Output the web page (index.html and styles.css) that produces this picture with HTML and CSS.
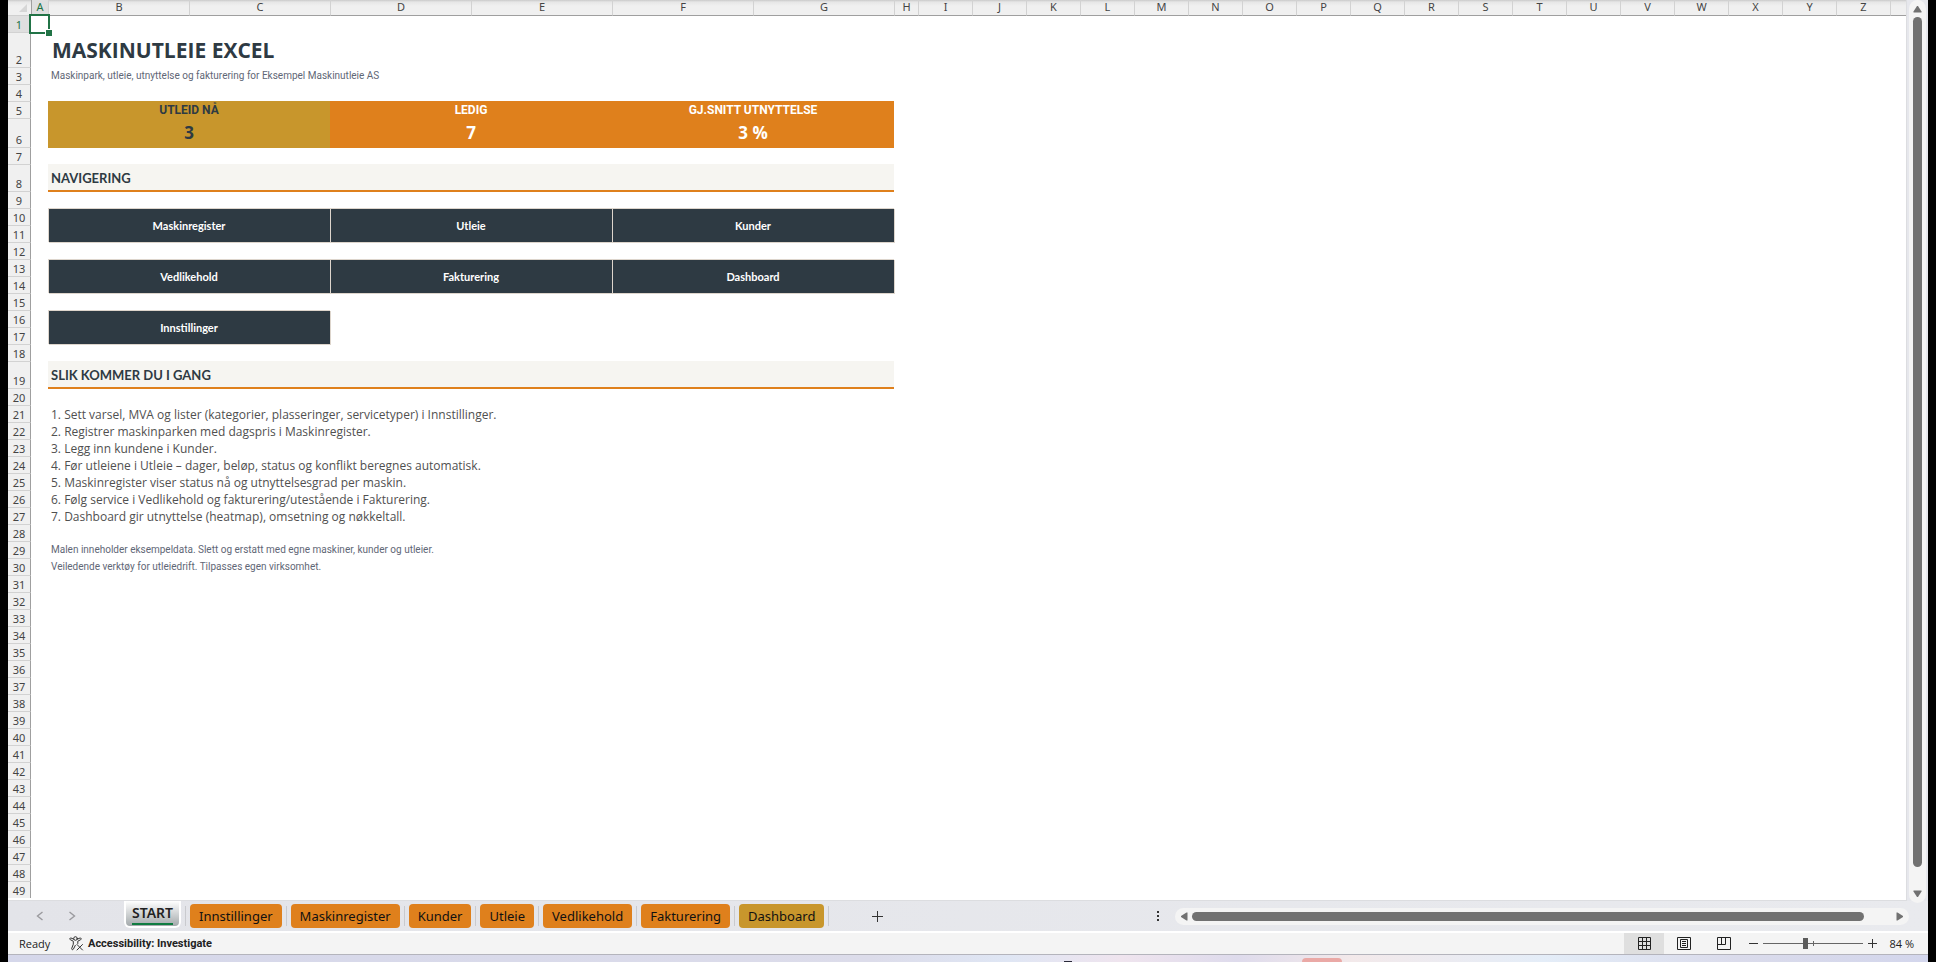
FILE: index.html
```
<!DOCTYPE html>
<html lang="nb">
<head>
<meta charset="utf-8">
<title>Maskinutleie Excel</title>
<link rel="stylesheet" href="styles.css">
</head>
<body>
<div class="window">
  <main class="workspace">
    <div class="sheet">
      <table class="grid">
        <colgroup>
          <col class="col-head"><col class="col-a"><col class="col-wide" span="6"><col class="col-h"><col class="col-std" span="18"><col>
        </colgroup>
        <thead>
          <tr>
            <th class="corner"><svg viewBox="0 0 8 8" width="8" height="8" aria-hidden="true"><path d="M8 0v8H0z" fill="#d6d6d6"/></svg></th>
            <th scope="col" class="selected">A</th><th scope="col">B</th><th scope="col">C</th><th scope="col">D</th><th scope="col">E</th><th scope="col">F</th><th scope="col">G</th><th scope="col">H</th><th scope="col">I</th><th scope="col">J</th><th scope="col">K</th><th scope="col">L</th><th scope="col">M</th><th scope="col">N</th><th scope="col">O</th><th scope="col">P</th><th scope="col">Q</th><th scope="col">R</th><th scope="col">S</th><th scope="col">T</th><th scope="col">U</th><th scope="col">V</th><th scope="col">W</th><th scope="col">X</th><th scope="col">Y</th><th scope="col">Z</th><th></th>
          </tr>
        </thead>
        <tbody>
          <tr class="row-first"><th scope="row" class="selected">1</th><td class="active-cell"><span class="cursor"></span></td><td colspan="26"></td></tr>
          <tr class="row-title"><th scope="row">2</th><td></td><td colspan="6" class="title">MASKINUTLEIE EXCEL</td><td colspan="20"></td></tr>
          <tr><th scope="row">3</th><td></td><td colspan="6" class="note">Maskinpark, utleie, utnyttelse og fakturering for Eksempel Maskinutleie AS</td><td colspan="20"></td></tr>
          <tr><th scope="row">4</th><td colspan="27"></td></tr>
          <tr><th scope="row">5</th><td></td><td colspan="2" class="kpi-label gold">UTLEID NÅ</td><td colspan="2" class="kpi-label orange">LEDIG</td><td colspan="2" class="kpi-label orange">GJ.SNITT UTNYTTELSE</td><td colspan="20"></td></tr>
          <tr class="row-kpi"><th scope="row">6</th><td></td><td colspan="2" class="kpi-value gold">3</td><td colspan="2" class="kpi-value orange">7</td><td colspan="2" class="kpi-value orange">3 %</td><td colspan="20"></td></tr>
          <tr><th scope="row">7</th><td colspan="27"></td></tr>
          <tr class="row-section"><th scope="row">8</th><td></td><td colspan="6" class="section">NAVIGERING</td><td colspan="20"></td></tr>
          <tr><th scope="row">9</th><td colspan="27"></td></tr>
          <tr><th scope="row">10</th><td></td><td colspan="2" rowspan="2"><a class="nav-link" href="#maskinregister">Maskinregister</a></td><td colspan="2" rowspan="2"><a class="nav-link" href="#utleie">Utleie</a></td><td colspan="2" rowspan="2"><a class="nav-link" href="#kunder">Kunder</a></td><td colspan="20"></td></tr>
          <tr><th scope="row">11</th><td></td><td colspan="20"></td></tr>
          <tr><th scope="row">12</th><td colspan="27"></td></tr>
          <tr><th scope="row">13</th><td></td><td colspan="2" rowspan="2"><a class="nav-link" href="#vedlikehold">Vedlikehold</a></td><td colspan="2" rowspan="2"><a class="nav-link" href="#fakturering">Fakturering</a></td><td colspan="2" rowspan="2"><a class="nav-link" href="#dashboard">Dashboard</a></td><td colspan="20"></td></tr>
          <tr><th scope="row">14</th><td></td><td colspan="20"></td></tr>
          <tr><th scope="row">15</th><td colspan="27"></td></tr>
          <tr><th scope="row">16</th><td></td><td colspan="2" rowspan="2"><a class="nav-link" href="#innstillinger">Innstillinger</a></td><td colspan="24"></td></tr>
          <tr><th scope="row">17</th><td></td><td colspan="24"></td></tr>
          <tr><th scope="row">18</th><td colspan="27"></td></tr>
          <tr class="row-section"><th scope="row">19</th><td></td><td colspan="6" class="section">SLIK KOMMER DU I GANG</td><td colspan="20"></td></tr>
          <tr><th scope="row">20</th><td colspan="27"></td></tr>
          <tr><th scope="row">21</th><td></td><td colspan="26" class="step">1. Sett varsel, MVA og lister (kategorier, plasseringer, servicetyper) i Innstillinger.</td></tr>
          <tr><th scope="row">22</th><td></td><td colspan="26" class="step">2. Registrer maskinparken med dagspris i Maskinregister.</td></tr>
          <tr><th scope="row">23</th><td></td><td colspan="26" class="step">3. Legg inn kundene i Kunder.</td></tr>
          <tr><th scope="row">24</th><td></td><td colspan="26" class="step">4. Før utleiene i Utleie – dager, beløp, status og konflikt beregnes automatisk.</td></tr>
          <tr><th scope="row">25</th><td></td><td colspan="26" class="step">5. Maskinregister viser status nå og utnyttelsesgrad per maskin.</td></tr>
          <tr><th scope="row">26</th><td></td><td colspan="26" class="step">6. Følg service i Vedlikehold og fakturering/utestående i Fakturering.</td></tr>
          <tr><th scope="row">27</th><td></td><td colspan="26" class="step">7. Dashboard gir utnyttelse (heatmap), omsetning og nøkkeltall.</td></tr>
          <tr><th scope="row">28</th><td colspan="27"></td></tr>
          <tr><th scope="row">29</th><td></td><td colspan="26" class="note">Malen inneholder eksempeldata. Slett og erstatt med egne maskiner, kunder og utleier.</td></tr>
          <tr><th scope="row">30</th><td></td><td colspan="26" class="note">Veiledende verktøy for utleiedrift. Tilpasses egen virksomhet.</td></tr>
          <tr><th scope="row">31</th><td colspan="27"></td></tr>
          <tr><th scope="row">32</th><td colspan="27"></td></tr>
          <tr><th scope="row">33</th><td colspan="27"></td></tr>
          <tr><th scope="row">34</th><td colspan="27"></td></tr>
          <tr><th scope="row">35</th><td colspan="27"></td></tr>
          <tr><th scope="row">36</th><td colspan="27"></td></tr>
          <tr><th scope="row">37</th><td colspan="27"></td></tr>
          <tr><th scope="row">38</th><td colspan="27"></td></tr>
          <tr><th scope="row">39</th><td colspan="27"></td></tr>
          <tr><th scope="row">40</th><td colspan="27"></td></tr>
          <tr><th scope="row">41</th><td colspan="27"></td></tr>
          <tr><th scope="row">42</th><td colspan="27"></td></tr>
          <tr><th scope="row">43</th><td colspan="27"></td></tr>
          <tr><th scope="row">44</th><td colspan="27"></td></tr>
          <tr><th scope="row">45</th><td colspan="27"></td></tr>
          <tr><th scope="row">46</th><td colspan="27"></td></tr>
          <tr><th scope="row">47</th><td colspan="27"></td></tr>
          <tr><th scope="row">48</th><td colspan="27"></td></tr>
          <tr><th scope="row">49</th><td colspan="27"></td></tr>
        </tbody>
      </table>
    </div>
    <div class="vscroll">
      <button class="scroll-btn" aria-label="Scroll up"><svg viewBox="0 0 9 8" width="9" height="8"><path d="M4 1h1l3.5 5.500v1h-8v-1z" fill="#717171"/></svg></button>
      <div class="vthumb"></div>
      <button class="scroll-btn" aria-label="Scroll down"><svg viewBox="0 0 9 8" width="9" height="8"><path d="M4 7h1l3.500-5.500v-1h-8v1z" fill="#717171"/></svg></button>
    </div>
  </main>

  <div class="tabstrip">
    <div class="tab-arrows">
      <button class="arrow" aria-label="Previous sheet"><svg viewBox="0 0 8 10" width="8" height="10"><path d="M6.500 1L1.500 5l5 4" fill="none" stroke="#9a9a9e" stroke-width="1.400"/></svg></button>
      <button class="arrow" aria-label="Next sheet"><svg viewBox="0 0 8 10" width="8" height="10"><path d="M1.500 1l5 4-5 4" fill="none" stroke="#9a9a9e" stroke-width="1.400"/></svg></button>
    </div>
    <div class="tabs">
      <div class="tab-slot"><button class="tab current"><span class="tab-name">START</span></button></div>
      <div class="tab-slot"><button class="tab">Innstillinger</button></div>
      <div class="tab-slot"><button class="tab">Maskinregister</button></div>
      <div class="tab-slot"><button class="tab">Kunder</button></div>
      <div class="tab-slot"><button class="tab">Utleie</button></div>
      <div class="tab-slot"><button class="tab">Vedlikehold</button></div>
      <div class="tab-slot"><button class="tab">Fakturering</button></div>
      <div class="tab-slot"><button class="tab tab-gold">Dashboard</button></div>
    </div>
    <button class="add-sheet" aria-label="New sheet"><svg viewBox="0 0 11 11" width="11" height="11"><path d="M5.500 0v11M0 5.500h11" stroke="#333" fill="none"/></svg></button>
    <div class="hscroll-area">
      <svg class="dots" viewBox="0 0 2 10" width="2" height="10" aria-hidden="true"><path d="M0 0h2v2H0zM0 4h2v2H0zM0 8h2v2H0z" fill="#333"/></svg>
      <div class="hscroll">
        <button class="scroll-btn" aria-label="Scroll left"><svg viewBox="0 0 8 9" width="8" height="9"><path d="M1 4v1l5.500 3.500h1v-8h-1z" fill="#717171"/></svg></button>
        <div class="hthumb"></div>
        <button class="scroll-btn" aria-label="Scroll right"><svg viewBox="0 0 8 9" width="8" height="9"><path d="M7 4v1L1.500 8.500h-1v-8h1z" fill="#717171"/></svg></button>
      </div>
    </div>
  </div>

  <footer class="status">
    <span class="ready">Ready</span>
    <button class="access">
      <svg viewBox="0 0 15 15" width="15" height="15" fill="none" stroke="#333" stroke-linejoin="round" stroke-linecap="round" aria-hidden="true"><circle cx="6.500" cy="2.500" r="1.800"/><path d="M4.800 3.200L2 2C.8 1.700.3 3.200 1.300 3.700L4.300 5.200v3L2.700 12.500c-.3 1.200 1.200 1.700 1.700.6L6.300 9.400M8.300 3.200L11 2c1.200-.3 1.700 1.200.7 1.700L8.800 5.200v2.300M8 8.500l5.500 5.500M13.500 8.500L8 14"/></svg>
      Accessibility: Investigate
    </button>
    <div class="view-tools">
      <button class="view view-on" aria-label="Normal"><svg viewBox="0 0 13 13" width="13" height="13" fill="none" stroke="#222"><path d="M.5.5h12v12H.5zM4.500.5v12M8.500.5v12M.5 4.500h12M.5 8.500h12"/></svg></button>
      <button class="view" aria-label="Page layout"><svg viewBox="0 0 14 13" width="14" height="13" fill="none" stroke="#222"><path d="M.5.5h13v12H.5zM3.500 2.500h7v8h-7zM5 4.500h4M5 6.500h4M5 8.500h4"/></svg></button>
      <button class="view" aria-label="Page break preview"><svg viewBox="0 0 14 13" width="14" height="13" fill="none" stroke="#222"><path d="M.5.5h13v12H.5zM4.500.5v7M.5 7.500h8v-7"/></svg></button>
      <button class="zoom-btn" aria-label="Zoom out"><svg viewBox="0 0 9 9" width="9" height="9"><path d="M0 4.500h9" stroke="#333"/></svg></button>
      <input class="zoom" type="range" min="0" max="100" value="42" aria-label="Zoom">
      <button class="zoom-btn" aria-label="Zoom in"><svg viewBox="0 0 9 9" width="9" height="9"><path d="M0 4.500h9M4.500 0v9" stroke="#333"/></svg></button>
      <span class="percent">84 %</span>
    </div>
  </footer>

  <div class="desktop"><span class="app-dark"></span><span class="app-pink"></span></div>
</div>
</body>
</html>
```
FILE: styles.css
```
* { box-sizing: border-box; }

body {
  margin: 0;
  background: #000;
  font-family: "Open Sans", "Noto Sans", sans-serif;
  font-size: 12px;
  color: #222;
}

button {
  margin: 0;
  padding: 0;
  border: 0;
  background: none;
  font: inherit;
  color: inherit;
  display: flex;
  align-items: center;
  justify-content: center;
}

.window {
  display: flex;
  flex-direction: column;
  height: 100vh;
  margin: 0 8px;
  background: #e6e7ec;
  overflow: hidden;
}

/* Worksheet */
.workspace {
  flex: 1;
  min-height: 0;
  display: flex;
  gap: 2px;
  padding-right: 2px;
}

.sheet {
  flex: 1;
  min-width: 0;
  overflow: hidden;
  background: #fff;
  border-bottom: 1px solid #dcdde0;
  border-right: 1px solid #dcdde0;
}

.grid {
  width: 100%;
  table-layout: fixed;
  border-collapse: separate;
  border-spacing: 0;
}

.col-head { width: 23px; }
.col-a { width: 17px; }
.col-wide { width: 141px; }
.col-h { width: 24px; }
.col-std { width: 54px; }

.grid th,
.grid td { padding: 0; }

.grid th {
  font-family: "Noto Sans", sans-serif;
  font-size: 11px;
  font-weight: 400;
  color: #444;
  text-align: center;
}

.grid thead th {
  height: 16px;
  line-height: 14px;
  vertical-align: top;
  background: linear-gradient(#c9c9c9 0, #e6e6e6 2px, #f0f0f0 6px);
  border-left: 1px solid #d2d2d2;
  border-bottom: 1px solid #9f9f9f;
}

.grid thead .corner {
  border-left: 0;
  border-bottom-color: #d0d0d0;
  text-align: right;
  padding: 4px 4px 0 0;
  line-height: 0;
}

.grid tbody tr { height: 17px; }

.grid tbody th {
  vertical-align: bottom;
  line-height: 15px;
  background: #f0f0f0;
  border-top: 1px solid #d2d2d2;
  border-right: 1px solid #9f9f9f;
}

.grid .row-first { height: 16px; }
.grid .row-title { height: 35px; }
.grid .row-kpi { height: 29px; }
.grid .row-section { height: 27px; }
.grid .row-first th { border-top: 0; }

.grid thead .selected,
.grid tbody .selected {
  background: #dfdfdf;
  color: #217346;
}

.grid thead .selected { border-left-color: #9f9f9f; }

.active-cell { position: relative; }

.cursor {
  position: absolute;
  inset: -2px -2px;
  border: 2px solid #217346;
}

.cursor::after {
  content: "";
  position: absolute;
  right: -4px;
  bottom: -4px;
  width: 6px;
  height: 6px;
  background: #217346;
  border: solid #fff;
  border-width: 1px 0 0 1px;
}

.grid .title {
  padding-left: 4px;
  font: 700 21px/28px "Open Sans", sans-serif;
  color: #2e3a43;
}

.grid .note {
  padding-left: 3px;
  font: 400 10px/16px Roboto, sans-serif;
  color: #5f6776;
}

.grid .kpi-label {
  font: 700 12px/16px Roboto, sans-serif;
  text-align: center;
}

.grid .kpi-value {
  font: 700 17px/24px "Open Sans", sans-serif;
  text-align: center;
}

.gold { background: #c8962c; color: #2e3a43; }
.orange { background: #df801c; color: #fff; }

/* Fills reach over the gridline under the row */
.kpi-value.gold { box-shadow: 0 1px #c8962c; }
.kpi-value.orange { box-shadow: 0 1px #df801c; }

.grid .section {
  padding: 2px 0 0 3px;
  background: #f6f5f1;
  border-bottom: 1px solid #df801c;
  box-shadow: 0 1px #df801c;
  font: 700 13px/20px Lato, sans-serif;
  color: #2e3a43;
}

.nav-link {
  display: flex;
  align-items: center;
  justify-content: center;
  height: 34px;
  padding-top: 2px;
  background: #2e3a43;
  box-shadow: inset 1px 1px #ddd5cc, 1px 1px #ddd5cc;
  font: 700 11px/16px Lato, sans-serif;
  color: #fff;
  text-decoration: none;
}

.grid .step {
  padding-left: 3px;
  font-size: 12px;
  line-height: 14px;
  vertical-align: bottom;
  color: #505050;
}

/* Scroll bars */
.vscroll {
  width: 17px;
  margin-bottom: -2px;
  position: relative;
  display: flex;
  flex-direction: column;
  align-items: center;
  justify-content: space-between;
  padding: 5px 0;
  background: #f4f4f4;
  border-radius: 9px;
}

.vthumb {
  flex: 1;
  width: 9px;
  margin: 4px 0 23px;
  background: #717171;
  border-radius: 5px;
}

.hscroll-area {
  flex: 1;
  display: flex;
  align-items: center;
  justify-content: flex-end;
  gap: 16px;
  padding-right: 19px;
}

.hscroll {
  display: flex;
  align-items: center;
  width: 72%;
  height: 17px;
  padding: 0 5px;
  background: #f4f4f4;
  border-radius: 9px;
}

.hthumb {
  flex: 1;
  height: 9px;
  margin: 0 32px 0 4px;
  background: #717171;
  border-radius: 5px;
}

/* Sheet tabs */
.tabstrip {
  display: flex;
  align-items: center;
  height: 30px;
  background: linear-gradient(90deg, #e3e4e9, #e9eaee);
}

.tab-arrows {
  display: flex;
  gap: 24px;
  width: 116px;
  padding-left: 28px;
}

.tabs { display: flex; }

.tab-slot {
  display: flex;
  align-items: flex-end;
  height: 30px;
  padding: 0 4px 3px;
  border-right: 1px solid transparent;
  border-image: linear-gradient(transparent 20%, #c9cace 20%, #c9cace 80%, transparent 80%) 1;
}

.tab-slot:first-child { padding-left: 0; }

.tab {
  height: 24px;
  padding: 0 9px;
  border-radius: 4px;
  background: #df801c;
  font-family: "Noto Sans", sans-serif;
  font-size: 13px;
  line-height: 20px;
  color: #111;
}

.tab-gold { background: #c8962c; }

.tab.current {
  height: 27px;
  padding: 0 6px;
  border: 2px solid #fff;
  border-top: 0;
  border-radius: 0 0 6px 6px;
  background: linear-gradient(#fff, #a3a9ab);
  font-size: 14px;
  font-weight: 600;
  color: #222;
}

.tab-name { border-bottom: 2px solid #107c41; }

.add-sheet { width: 24px; height: 24px; margin-left: 36px; }

/* Status bar */
.status {
  display: flex;
  align-items: center;
  height: 24px;
  padding: 0 14px 0 11px;
  background: #f4f4f4;
  border-top: 2px solid #fff;
  border-bottom: 1px solid #b4b4bc;
  font-size: 11px;
}

.ready { width: 50px; }

.access {
  gap: 4px;
  font-family: Roboto, sans-serif;
  font-weight: 700;
}

.view-tools {
  display: flex;
  align-items: center;
  margin-left: auto;
  height: 21px;
}

.view { width: 40px; height: 21px; }
.view-on { background: #dfdfdf; }

.zoom-btn { width: 19px; height: 21px; }

.zoom {
  appearance: none;
  width: 100px;
  height: 11px;
  margin: 0;
  background:
    linear-gradient(#666, #666) 50px 50% / 1px 5px no-repeat,
    linear-gradient(#666, #666) 0 50% / 100% 1px no-repeat;
}

.zoom::-webkit-slider-thumb {
  appearance: none;
  width: 5px;
  height: 11px;
  background: #5c5c5c;
}

.percent { width: 32px; text-align: right; }

/* Desktop edge below the window */
.desktop {
  position: relative;
  height: 7px;
  background: linear-gradient(90deg, #d5d7ea, #dcdcea 45%, #dfe6f4 52%, #efe4ee 58%, #dedbec 64%, #f3e9ea 70%, #e4edf8 80%, #dadbeb 90%, #d3d6ec);
}

.app-dark,
.app-pink {
  position: absolute;
  bottom: 0;
}

.app-dark { left: 55%; width: 8px; height: 1px; background: #2a2a3a; }
.app-pink { left: 67.400%; width: 40px; height: 4px; border-radius: 4px 4px 0 0; background: #eaa9a6; }
```
